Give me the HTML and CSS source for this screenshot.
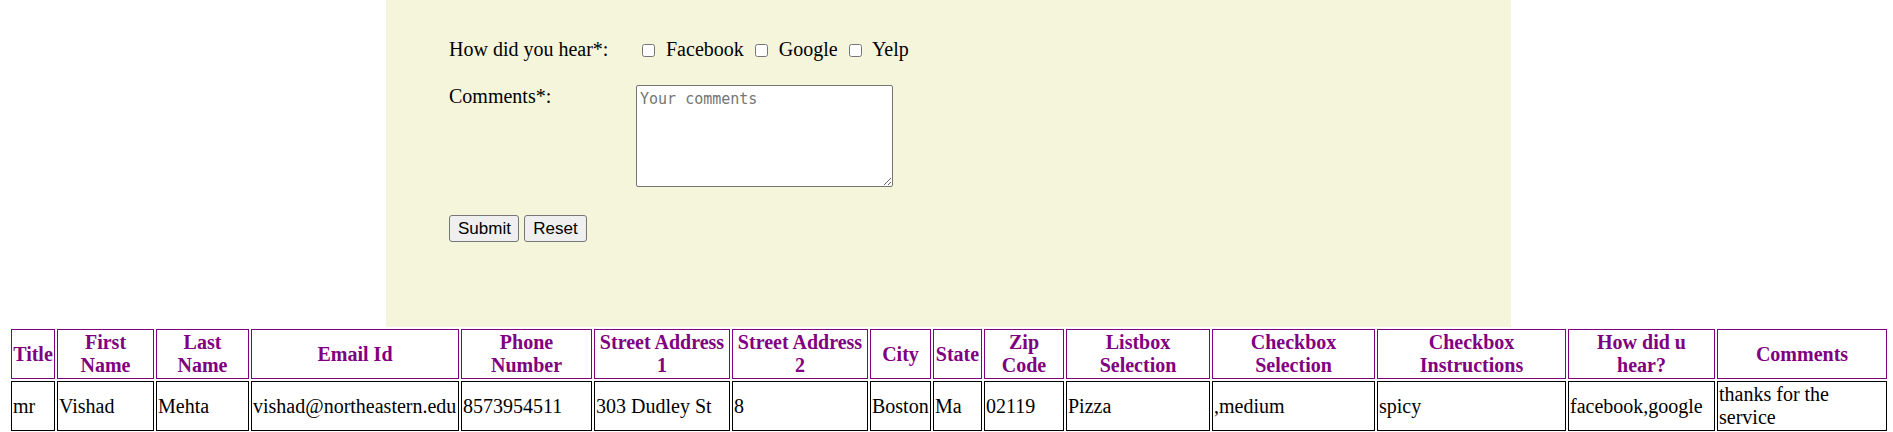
FILE: index.html
```html
<!DOCTYPE html>
<html>
<head>
<meta charset="utf-8">
<link rel="stylesheet" href="styles.css">
</head>
<body>
<div class="panel">
  <div class="row row-hear">
    <div class="label">How did you hear*:</div>
    <div class="field">
      <input type="checkbox" class="cb"> Facebook <input type="checkbox" class="cb"> Google <input type="checkbox" class="cb"> Yelp
    </div>
  </div>
  <div class="row row-comments">
    <div class="label">Comments*:</div>
    <div class="field"><textarea class="comments" placeholder="Your comments"></textarea></div>
  </div>
  <div class="actions">
    <button class="btn btn-submit">Submit</button>
    <button class="btn btn-reset">Reset</button>
  </div>
</div>
<table class="data">
  <thead>
    <tr>
      <th class="c-title">Title</th>
      <th class="c-first">First Name</th>
      <th class="c-last">Last Name</th>
      <th class="c-email">Email Id</th>
      <th class="c-phone">Phone Number</th>
      <th class="c-st1">Street Address 1</th>
      <th class="c-st2">Street Address 2</th>
      <th class="c-city">City</th>
      <th class="c-state">State</th>
      <th class="c-zip">Zip Code</th>
      <th class="c-list">Listbox Selection</th>
      <th class="c-cbsel">Checkbox Selection</th>
      <th class="c-cbins">Checkbox Instructions</th>
      <th class="c-how">How did u hear?</th>
      <th class="c-comm">Comments</th>
    </tr>
  </thead>
  <tbody>
    <tr>
      <td>mr</td>
      <td>Vishad</td>
      <td>Mehta</td>
      <td>vishad@northeastern.edu</td>
      <td>8573954511</td>
      <td>303 Dudley St</td>
      <td>8</td>
      <td>Boston</td>
      <td>Ma</td>
      <td>02119</td>
      <td>Pizza</td>
      <td>,medium</td>
      <td>spicy</td>
      <td>facebook,google</td>
      <td>thanks for the service</td>
    </tr>
  </tbody>
</table>
</body>
</html>
```
FILE: styles.css
```css
html, body {
  margin: 0;
  padding: 0;
  background: #ffffff;
}
body {
  font-family: "Liberation Serif", "Times New Roman", serif;
  font-size: 20px;
  color: #000;
}
.panel {
  margin-left: 386px;
  width: 1125px;
  height: 327px;
  box-sizing: border-box;
  background: #f5f5dc;
  padding: 38px 0 0 63px;
}
.row {
  display: flex;
  line-height: 23px;
}
.row-hear {
  align-items: baseline;
}
.row-comments {
  margin-top: 24px;
  align-items: flex-start;
}
.label {
  width: 187px;
  flex: none;
}
.cb {
  width: 13px;
  height: 13px;
  margin: 0 6px 0 6px;
  vertical-align: -1px;
}
.comments {
  display: block;
  width: 257px;
  height: 102px;
  box-sizing: border-box;
  margin: 0;
  padding: 4px 3px 2px;
  border: 1px solid #767676;
  border-radius: 2px;
  background: #fff;
  font-family: "DejaVu Sans Mono", "Liberation Mono", monospace;
  font-size: 15px;
  line-height: 18px;
  resize: both;
}
.comments::placeholder {
  color: #757575;
}
.actions {
  margin-top: 28px;
  display: flex;
  gap: 5px;
}
.btn {
  height: 27px;
  box-sizing: border-box;
  padding: 0 8px;
  margin: 0;
  border: 1px solid #767676;
  border-radius: 3px;
  background: #efefef;
  font-family: "Liberation Sans", Arial, sans-serif;
  font-size: 17px;
  color: #000;
}
.btn-submit { width: 70px; }
.btn-reset { width: 63px; }
.data {
  margin-left: 9px;
  border-collapse: separate;
  border-spacing: 2px;
  table-layout: fixed;
  width: 1880px;
  font-size: 20px;
}
.data th, .data td {
  box-sizing: border-box;
  padding: 1px;
  line-height: 23px;
}
.data th {
  color: #800080;
  border: 1px solid #800080;
  font-weight: bold;
  text-align: center;
  height: 50px;
}
.data td {
  border: 1px solid #000;
  text-align: left;
  vertical-align: middle;
  height: 50px;
}
.c-title { width: 44px; }
.c-first { width: 97px; }
.c-last { width: 93px; }
.c-email { width: 208px; }
.c-phone { width: 131px; }
.c-st1 { width: 136px; }
.c-st2 { width: 136px; }
.c-city { width: 61px; }
.c-state { width: 49px; }
.c-zip { width: 80px; }
.c-list { width: 144px; }
.c-cbsel { width: 163px; }
.c-cbins { width: 189px; }
.c-how { width: 147px; }
.c-comm { width: 170px; }
.data th.c-how { padding: 1px 8px; }
```
